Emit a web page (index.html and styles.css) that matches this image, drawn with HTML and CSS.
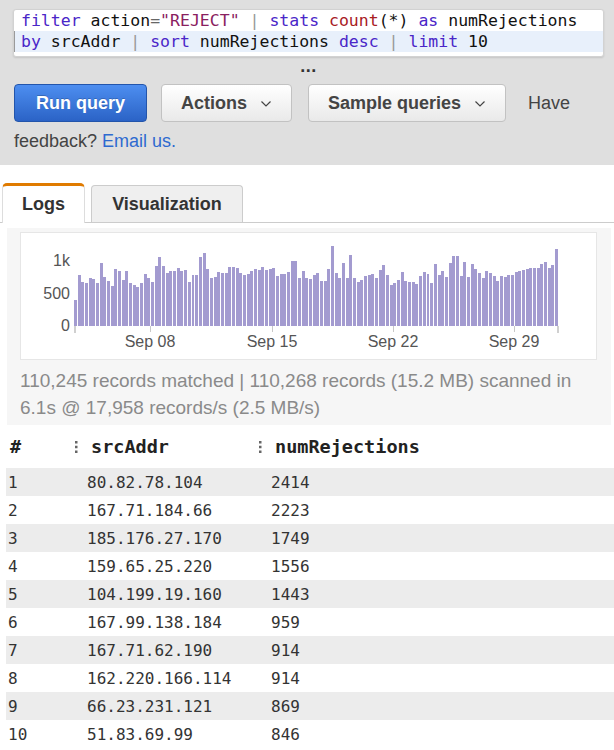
FILE: index.html
```html
<!DOCTYPE html>
<html lang="en">
<head>
<meta charset="utf-8">
<title>Logs Insights</title>
<link rel="stylesheet" href="styles.css">
</head>
<body>
<div class="top">
  <div class="editor">
    <div class="line"><span class="kw">filter</span> action<span class="op">=</span><span class="str">"REJECT"</span> <span class="pipe">|</span> <span class="kw">stats</span> <span class="fn">count</span>(*) <span class="kw">as</span> numRejections</div>
    <div class="line active"><span class="kw">by</span> srcAddr <span class="pipe">|</span> <span class="kw">sort</span> numRejections <span class="kw">desc</span> <span class="pipe">|</span> <span class="kw">limit</span> 10</div>
  </div>
  <div class="more">...</div>
  <div class="actions"><button class="btn primary">Run query</button><button class="btn">Actions<svg class="chev" viewBox="0 0 10 6" width="10" height="6"><path d="M0.5 0.5 L5 5 L9.5 0.5" fill="none" stroke="#444" stroke-width="1.2"/></svg></button><button class="btn">Sample queries<svg class="chev" viewBox="0 0 10 6" width="10" height="6"><path d="M0.5 0.5 L5 5 L9.5 0.5" fill="none" stroke="#444" stroke-width="1.2"/></svg></button><span class="fb">Have</span> <span class="fb">feedback?</span> <a class="link" href="#">Email us.</a></div>
</div>

<div class="tabs">
  <div class="tab current">Logs</div>
  <div class="tab">Visualization</div>
</div>

<div class="panel">
  <div class="chart">
    <div class="plot-row">
      <div class="yaxis">
        <span class="ylab" style="bottom:65px">1k</span>
        <span class="ylab" style="bottom:32.5px">500</span>
        <span class="ylab" style="bottom:0px">0</span>
      </div>
      <div class="bars">
<div class="b" style="height:26px"></div><div class="b" style="height:51px"></div><div class="b" style="height:44px"></div><div class="b" style="height:43px"></div><div class="b" style="height:48px"></div><div class="b" style="height:47px"></div><div class="b" style="height:43px"></div><div class="b" style="height:63px"></div><div class="b" style="height:49px"></div><div class="b" style="height:45px"></div><div class="b" style="height:40px"></div><div class="b" style="height:57px"></div><div class="b" style="height:55px"></div><div class="b" style="height:46px"></div><div class="b" style="height:55px"></div><div class="b" style="height:43px"></div><div class="b" style="height:41px"></div><div class="b" style="height:39px"></div><div class="b" style="height:43px"></div><div class="b" style="height:52px"></div><div class="b" style="height:48px"></div><div class="b" style="height:44px"></div><div class="b" style="height:60px"></div><div class="b" style="height:69px"></div><div class="b" style="height:60px"></div><div class="b" style="height:53px"></div><div class="b" style="height:55px"></div><div class="b" style="height:55px"></div><div class="b" style="height:58px"></div><div class="b" style="height:55px"></div><div class="b" style="height:56px"></div>
<div class="b" style="height:44px"></div><div class="b" style="height:51px"></div><div class="b" style="height:51px"></div><div class="b" style="height:69px"></div><div class="b" style="height:73px"></div><div class="b" style="height:57px"></div><div class="b" style="height:48px"></div><div class="b" style="height:49px"></div><div class="b" style="height:54px"></div><div class="b" style="height:53px"></div><div class="b" style="height:53px"></div><div class="b" style="height:59px"></div><div class="b" style="height:59px"></div><div class="b" style="height:58px"></div><div class="b" style="height:53px"></div><div class="b" style="height:51px"></div><div class="b" style="height:52px"></div><div class="b" style="height:55px"></div><div class="b" style="height:57px"></div><div class="b" style="height:56px"></div><div class="b" style="height:59px"></div><div class="b" style="height:56px"></div><div class="b" style="height:57px"></div><div class="b" style="height:58px"></div><div class="b" style="height:50px"></div><div class="b" style="height:52px"></div><div class="b" style="height:52px"></div><div class="b" style="height:54px"></div><div class="b" style="height:65px"></div><div class="b" style="height:65px"></div><div class="b" style="height:48px"></div><div class="b" style="height:55px"></div><div class="b" style="height:48px"></div><div class="b" style="height:47px"></div>
<div class="b" style="height:51px"></div><div class="b" style="height:53px"></div><div class="b" style="height:45px"></div><div class="b" style="height:45px"></div><div class="b" style="height:57px"></div><div class="b" style="height:80px"></div><div class="b" style="height:53px"></div><div class="b" style="height:48px"></div><div class="b" style="height:63px"></div><div class="b" style="height:48px"></div><div class="b" style="height:71px"></div><div class="b" style="height:48px"></div><div class="b" style="height:44px"></div><div class="b" style="height:46px"></div><div class="b" style="height:50px"></div><div class="b" style="height:51px"></div><div class="b" style="height:52px"></div><div class="b" style="height:48px"></div><div class="b" style="height:56px"></div><div class="b" style="height:61px"></div><div class="b" style="height:51px"></div><div class="b" style="height:41px"></div><div class="b" style="height:43px"></div><div class="b" style="height:46px"></div><div class="b" style="height:54px"></div><div class="b" style="height:45px"></div><div class="b" style="height:44px"></div><div class="b" style="height:44px"></div><div class="b" style="height:42px"></div><div class="b" style="height:50px"></div><div class="b" style="height:54px"></div><div class="b" style="height:52px"></div><div class="b" style="height:43px"></div>
<div class="b" style="height:62px"></div><div class="b" style="height:51px"></div><div class="b" style="height:55px"></div><div class="b" style="height:49px"></div><div class="b" style="height:63px"></div><div class="b" style="height:70px"></div><div class="b" style="height:70px"></div><div class="b" style="height:50px"></div><div class="b" style="height:64px"></div><div class="b" style="height:49px"></div><div class="b" style="height:62px"></div><div class="b" style="height:57px"></div><div class="b" style="height:53px"></div><div class="b" style="height:48px"></div><div class="b" style="height:55px"></div><div class="b" style="height:53px"></div><div class="b" style="height:50px"></div><div class="b" style="height:45px"></div><div class="b" style="height:50px"></div><div class="b" style="height:49px"></div><div class="b" style="height:51px"></div><div class="b" style="height:51px"></div><div class="b" style="height:54px"></div><div class="b" style="height:55px"></div><div class="b" style="height:56px"></div><div class="b" style="height:57px"></div><div class="b" style="height:58px"></div><div class="b" style="height:58px"></div><div class="b" style="height:58px"></div><div class="b" style="height:62px"></div><div class="b" style="height:64px"></div><div class="b" style="height:58px"></div><div class="b" style="height:61px"></div><div class="b" style="height:77px"></div>
      </div>
    </div>
    <div class="xaxis">
      <span class="tick end" style="left:0px"></span>
      <span class="tick" style="left:76px"></span>
      <span class="tick" style="left:198px"></span>
      <span class="tick" style="left:319px"></span>
      <span class="tick" style="left:440px"></span>
      <span class="tick end" style="left:483px"></span>
      <span class="xlab" style="left:76px">Sep 08</span>
      <span class="xlab" style="left:198px">Sep 15</span>
      <span class="xlab" style="left:319px">Sep 22</span>
      <span class="xlab" style="left:440px">Sep 29</span>
    </div>
  </div>
  <p class="stats">110,245 records matched | 110,268 records (15.2 MB) scanned in 6.1s @ 17,958 records/s (2.5 MB/s)</p>
</div>

<div class="table">
  <div class="row head">
    <div class="cell c1">#</div>
    <div class="cell c2"><svg class="grip" viewBox="0 0 3 12" width="3" height="12"><rect x="0" y="0" width="2.5" height="2.5" fill="#666"/><rect x="0" y="4.75" width="2.5" height="2.5" fill="#666"/><rect x="0" y="9.5" width="2.5" height="2.5" fill="#666"/></svg>srcAddr</div>
    <div class="cell c3"><svg class="grip" viewBox="0 0 3 12" width="3" height="12"><rect x="0" y="0" width="2.5" height="2.5" fill="#666"/><rect x="0" y="4.75" width="2.5" height="2.5" fill="#666"/><rect x="0" y="9.5" width="2.5" height="2.5" fill="#666"/></svg>numRejections</div>
  </div>
  <div class="row odd"><div class="cell c1">1</div><div class="cell c2">80.82.78.104</div><div class="cell c3">2414</div></div>
  <div class="row"><div class="cell c1">2</div><div class="cell c2">167.71.184.66</div><div class="cell c3">2223</div></div>
  <div class="row odd"><div class="cell c1">3</div><div class="cell c2">185.176.27.170</div><div class="cell c3">1749</div></div>
  <div class="row"><div class="cell c1">4</div><div class="cell c2">159.65.25.220</div><div class="cell c3">1556</div></div>
  <div class="row odd"><div class="cell c1">5</div><div class="cell c2">104.199.19.160</div><div class="cell c3">1443</div></div>
  <div class="row"><div class="cell c1">6</div><div class="cell c2">167.99.138.184</div><div class="cell c3">959</div></div>
  <div class="row odd"><div class="cell c1">7</div><div class="cell c2">167.71.62.190</div><div class="cell c3">914</div></div>
  <div class="row"><div class="cell c1">8</div><div class="cell c2">162.220.166.114</div><div class="cell c3">914</div></div>
  <div class="row odd"><div class="cell c1">9</div><div class="cell c2">66.23.231.121</div><div class="cell c3">869</div></div>
  <div class="row"><div class="cell c1">10</div><div class="cell c2">51.83.69.99</div><div class="cell c3">846</div></div>
</div>
</body>
</html>
```

FILE: styles.css
```css
* { box-sizing: border-box; }
html, body { margin: 0; padding: 0; background: #fff; }
body {
  font-family: "Liberation Sans", Arial, Helvetica, sans-serif;
  color: #333;
  width: 614px;
  overflow: hidden;
}

/* ---------- top query area ---------- */
.top {
  background: #dfdfdf;
  padding: 9px 10px 5px 13px;
}
.editor {
  background: #fff;
  border: 1px solid #d2d2d2;
  border-radius: 3px;
  box-shadow: 0 1px 2px rgba(0,0,0,0.12);
  padding: 0 0 4px 0;
  font-family: "DejaVu Sans Mono", "Liberation Mono", monospace;
  font-size: 16.5px;
  color: #111;
}
.line {
  height: 21px;
  line-height: 21px;
  padding-left: 6px;
  white-space: pre;
  border-left: 1px solid transparent;
}
.line.active {
  background: #e8f0fb;
  border-left-color: #9a9a9a;
}
.kw { color: #4a26c8; }
.str { color: #8a2060; }
.fn { color: #a8201f; }
.op { color: #666; }
.pipe { color: #999; }

.more {
  height: 27px;
  padding-top: 2px;
  line-height: 14px;
  text-align: center;
  font-weight: bold;
  font-size: 18px;
  color: #333;
  letter-spacing: 0.5px;
}

.actions {
  padding-left: 1px;
  font-size: 18px;
  line-height: 38px;
  color: #444;
}
.btn {
  display: inline-flex;
  align-items: center;
  vertical-align: top;
  height: 38px;
  line-height: 22px;
  font-family: "Liberation Sans", Arial, sans-serif;
  font-size: 18px;
  font-weight: bold;
  color: #444;
  border: 1px solid #c2c2c2;
  border-radius: 4px;
  background: linear-gradient(#ffffff, #e9e9e9);
  padding: 0 20px 0 19px;
  margin: 0 16px 0 0;
  gap: 14px;
}
.btn.primary {
  color: #fff;
  background: linear-gradient(#4d8ef0, #2b63c6);
  border-color: #2355ab;
  padding: 0 21px;
  margin-right: 14px;
  text-shadow: 0 -1px 0 rgba(0,0,0,0.2);
}
.btn:last-of-type { margin-right: 22px; }
.chev { display: block; margin-top: 1px; }
.link { color: #2e6ad0; text-decoration: none; }

/* ---------- tabs ---------- */
.tabs {
  display: flex;
  align-items: flex-end;
  margin-top: 18px;
  height: 40px;
  border-bottom: 1px solid #cccccc;
}
.tab {
  height: 37px;
  margin-left: 6px;
  width: 152px;
  display: flex;
  align-items: center;
  justify-content: center;
  font-size: 18px;
  font-weight: bold;
  color: #333;
  background: #efefef;
  border: 1px solid #cccccc;
  border-bottom: none;
  border-radius: 4px 4px 0 0;
}
.tab.current {
  margin-left: 2px;
  width: 83px;
  height: 40px;
  margin-bottom: -1px;
  background: #fff;
  border: 1px solid #dddddd;
  border-top: 3px solid #e07b00;
  border-bottom: none;
  border-radius: 5px 5px 0 0;
}

/* ---------- panel / chart ---------- */
.panel {
  margin: 5px 3px 0 7px;
  background: #f6f6f6;
  padding: 4px 14px 4px 13px;
}
.chart {
  background: #fff;
  border: 1px solid #e6e6e6;
  height: 128px;
  padding-top: 11px;
}
.plot-row {
  display: flex;
  height: 82px;
}
.yaxis {
  position: relative;
  width: 53px;
  flex: none;
}
.ylab {
  position: absolute;
  right: 4px;
  transform: translateY(50%);
  font-size: 16px;
  line-height: 18px;
  color: #555;
}
.bars {
  width: 485px;
  flex: none;
  display: flex;
  align-items: flex-end;
  gap: 0.7px;
}
.b {
  flex: 1 1 0;
  background: #a39bd0;
}
.xaxis {
  position: relative;
  margin-left: 53px;
  width: 485px;
  height: 33px;
}
.tick {
  position: absolute;
  top: 0;
  width: 1px;
  height: 6px;
  background: #c8c8c8;
}
.tick.end { width: 2px; height: 7px; background: #d0d0d0; }
.xlab {
  position: absolute;
  top: 7px;
  transform: translateX(-50%);
  font-size: 16px;
  line-height: 18px;
  color: #555;
  white-space: nowrap;
}
.stats {
  margin: 7px 0 0 0;
  font-size: 19px;
  line-height: 27px;
  color: #8a8a8a;
}

/* ---------- table ---------- */
.table {
  margin-left: 6px;
  font-family: "DejaVu Sans Mono", "Liberation Mono", monospace;
  font-size: 16px;
  color: #333;
}
.row {
  display: grid;
  grid-template-columns: 66px 184px 1fr;
  height: 28px;
  align-items: center;
}
.row.odd { background: #ececec; }
.row.head {
  height: 43px;
  font-weight: bold;
  font-size: 18.5px;
  color: #222;
}
.cell.c1 { padding-left: 2px; }
.cell.c2, .cell.c3 { padding-left: 15px; }
.head .cell.c1 { padding-left: 4px; }
.head .cell.c2, .head .cell.c3 {
  display: flex;
  align-items: center;
  gap: 13px;
  padding-left: 3px;
}
.grip { display: block; }
```
